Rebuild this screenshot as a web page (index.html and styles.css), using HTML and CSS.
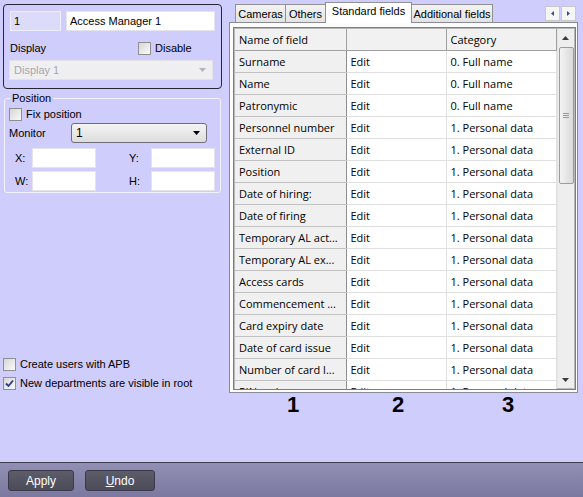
FILE: index.html
```html
<!DOCTYPE html>
<html lang="en">
<head>
<meta charset="UTF-8">
<meta name="viewport" content="width=device-width, initial-scale=1.0">
<title>Access Manager 1</title>
<link rel="stylesheet" href="styles.css">
</head>
<body>
<div class="window">
    <div class="main">
        <div class="left">
            <div class="object-box">
                <div class="name-row">
                    <input class="field id-input" type="text" value="1">
                    <input class="field name-input" type="text" value="Access Manager 1">
                </div>
                <div class="display-row">
                    <span>Display</span>
                    <label class="check"><span class="box"></span>Disable</label>
                </div>
                <div class="select disabled">
                    <span>Display 1</span>
                    <svg class="arrow" width="7" height="4" viewBox="0 0 7 4"><path d="M0 0h7L3.5 4z" fill="#b4b4b8"/></svg>
                </div>
            </div>

            <fieldset class="position">
                <legend>Position</legend>
                <label class="check"><span class="box"></span>Fix position</label>
                <div class="monitor-row">
                    <span class="monitor-label">Monitor</span>
                    <div class="select combo">
                        <span>1</span>
                        <svg class="arrow" width="7" height="4" viewBox="0 0 7 4"><path d="M0 0h7L3.5 4z" fill="#000"/></svg>
                    </div>
                </div>
                <div class="coords">
                    <span class="coord-label">X:</span><input class="field" type="text">
                    <span class="coord-label wide">Y:</span><input class="field" type="text">
                    <span class="coord-label">W:</span><input class="field" type="text">
                    <span class="coord-label wide">H:</span><input class="field" type="text">
                </div>
            </fieldset>

            <div class="options">
                <label class="check"><span class="box"></span>Create users with APB</label>
                <label class="check">
                    <span class="box">
                        <svg width="9" height="9" viewBox="0 0 9 9"><path d="M1 4.5l2.5 2.5L8 1.5" fill="none" stroke="#2b3a80" stroke-width="1.8"/></svg>
                    </span>New departments are visible in root
                </label>
            </div>
        </div>

        <div class="right">
            <div class="tabs">
                <span class="tab" style="width: 51px">Cameras</span>
                <span class="tab" style="width: 41px">Others</span>
                <span class="tab active" style="width: 87px">Standard fields</span>
                <span class="tab" style="width: 82px">Additional fields</span>
                <div class="tab-scroll">
                    <span class="tab-btn"><svg width="3" height="5" viewBox="0 0 3 5"><path d="M3 0v5L0 2.5z" fill="#3d4f7c"/></svg></span>
                    <span class="tab-btn"><svg width="3" height="5" viewBox="0 0 3 5"><path d="M0 0v5l3-2.5z" fill="#3d4f7c"/></svg></span>
                </div>
            </div>

            <div class="panel">
                <div class="grid">
                    <table class="fields">
                        <colgroup>
                            <col style="width: 111px">
                            <col style="width: 100px">
                            <col style="width: 110px">
                        </colgroup>
                        <thead>
                            <tr><th>Name of field</th><th></th><th>Category</th></tr>
                        </thead>
                        <tbody>
                            <tr><td>Surname</td><td>Edit</td><td>0. Full name</td></tr>
                            <tr><td>Name</td><td>Edit</td><td>0. Full name</td></tr>
                            <tr><td>Patronymic</td><td>Edit</td><td>0. Full name</td></tr>
                            <tr><td>Personnel number</td><td>Edit</td><td>1. Personal data</td></tr>
                            <tr><td>External ID</td><td>Edit</td><td>1. Personal data</td></tr>
                            <tr><td>Position</td><td>Edit</td><td>1. Personal data</td></tr>
                            <tr><td>Date of hiring:</td><td>Edit</td><td>1. Personal data</td></tr>
                            <tr><td>Date of firing</td><td>Edit</td><td>1. Personal data</td></tr>
                            <tr><td>Temporary AL act...</td><td>Edit</td><td>1. Personal data</td></tr>
                            <tr><td>Temporary AL ex...</td><td>Edit</td><td>1. Personal data</td></tr>
                            <tr><td>Access cards</td><td>Edit</td><td>1. Personal data</td></tr>
                            <tr><td>Commencement ...</td><td>Edit</td><td>1. Personal data</td></tr>
                            <tr><td>Card expiry date</td><td>Edit</td><td>1. Personal data</td></tr>
                            <tr><td>Date of card issue</td><td>Edit</td><td>1. Personal data</td></tr>
                            <tr><td>Number of card l...</td><td>Edit</td><td>1. Personal data</td></tr>
                            <tr><td>PIN code</td><td>Edit</td><td>1. Personal data</td></tr>
                        </tbody>
                    </table>
                    <div class="vscroll">
                        <span class="sb-btn"><svg width="7" height="4" viewBox="0 0 7 4"><path d="M0 4h7L3.5 0z" fill="#3a3a3a"/></svg></span>
                        <span class="thumb"><span class="grip"></span></span>
                        <span class="sb-btn down"><svg width="7" height="4" viewBox="0 0 7 4"><path d="M0 0h7L3.5 4z" fill="#3a3a3a"/></svg></span>
                    </div>
                </div>
            </div>

            <div class="markers">
                <span style="width: 116px">1</span>
                <span style="width: 94px">2</span>
                <span style="width: 126px">3</span>
            </div>
        </div>
    </div>

    <div class="bar">
        <button class="btn apply">Apply</button>
        <button class="btn undo"><u>U</u>ndo</button>
    </div>
</div>
</body>
</html>
```

FILE: styles.css
```css
/* Access Manager settings */
* {
    margin: 0;
    padding: 0;
    box-sizing: border-box;
}

body {
    width: 583px;
    height: 497px;
    overflow: hidden;
    background-color: #cfcdfb;
    color: #000;
    font-family: "Liberation Sans", Arial, sans-serif;
    font-size: 11px;
}

.window {
    display: flex;
    flex-direction: column;
    height: 497px;
}

.main {
    display: flex;
    height: 462px;
}

/* left side */
.left {
    width: 229px;
    padding: 4px 0 0 3px;
    display: flex;
    flex-direction: column;
}

.object-box {
    width: 219px;
    height: 85px;
    border: 1px solid #262634;
    border-radius: 4px;
    padding: 6px 0 0 6px;
}

.name-row {
    display: flex;
    gap: 5px;
}

.field {
    height: 20px;
    border: 1px solid #e4e4ee;
    background: #fff;
    padding: 0 3px;
    font: inherit;
    color: #000;
    outline: none;
}

.id-input {
    width: 51px;
    background: #dcdbf9;
    border-color: #eeeeff;
}

.name-input {
    width: 149px;
}

.display-row {
    display: grid;
    grid-template-columns: 128px auto;
    align-items: center;
    height: 14px;
    margin-top: 10px;
}

.check {
    display: flex;
    align-items: center;
    gap: 4px;
    height: 14px;
}

.box {
    width: 13px;
    height: 13px;
    border: 1px solid #8e8f8f;
    background: linear-gradient(135deg, #d6d6d6, #fafafa);
    display: flex;
    align-items: center;
    justify-content: center;
}

.select {
    display: flex;
    align-items: center;
    justify-content: space-between;
    height: 20px;
    padding: 0 6px 0 4px;
}

.select.disabled {
    width: 204px;
    margin: 5px 0 0 -1px;
    background: #efeff2;
    border: 1px solid #e2e2e8;
    color: #a6a6ac;
}

.select.combo {
    width: 136px;
    border: 1px solid #6f6f78;
    border-radius: 3px;
    background: linear-gradient(#f4f4f4, #dcdcdc);
    font-size: 12px;
}

/* position group */
.position {
    width: 217px;
    margin: 2px 0 0 1px;
    border: 1px solid #f2f2fd;
    border-radius: 3px;
    padding: 0 4px 1px 4px;
}

.position legend {
    margin-left: 1px;
    padding: 0 2px;
    line-height: 14px;
}

.position .check {
    margin-top: 2px;
}

.monitor-row {
    display: flex;
    align-items: center;
    height: 20px;
    margin-top: 2px;
}

.monitor-label {
    width: 62px;
}

.coords {
    display: grid;
    grid-template-columns: 23px 64px 55px 64px;
    grid-auto-rows: 20px;
    row-gap: 3px;
    align-items: center;
    margin-top: 5px;
}

.coord-label {
    padding-left: 6px;
}

.coord-label.wide {
    padding-left: 33px;
}

.coords .field {
    width: 64px;
}

.options {
    margin-top: 164px;
    display: flex;
    flex-direction: column;
    gap: 5px;
}

/* right side */
.right {
    width: 349px;
}

.tabs {
    display: flex;
    align-items: flex-end;
    height: 23px;
    padding-left: 6px;
    border-bottom: 1px solid #898c95;
}

.tab {
    height: 18px;
    margin-right: -1px;
    border: 1px solid #919191;
    border-bottom: none;
    background: linear-gradient(#f3f3f3, #e3e3e3);
    text-align: center;
    line-height: 18px;
    white-space: nowrap;
}

.tab.active {
    position: relative;
    height: 21px;
    margin-bottom: -1px;
    background: #fff;
    line-height: 17px;
}

.tab-scroll {
    display: flex;
    gap: 1px;
    align-self: flex-start;
    margin: 6px 2px 0 auto;
}

.tab-btn {
    width: 15px;
    height: 15px;
    border: 1px solid #c9c9cc;
    background: #f6f6f6;
    display: flex;
    align-items: center;
    justify-content: center;
}

.panel {
    height: 370px;
    border: 1px solid #898c95;
    border-top: none;
    background: #fcfcfc;
    padding: 4px 1px 0 3px;
}

.grid {
    display: flex;
    align-items: flex-start;
    width: 343px;
    height: 363px;
    border: 1px solid #7d7d7d;
    padding: 1px;
    background: #b8b8b8;
    overflow: hidden;
}

.fields {
    width: 321px;
    table-layout: fixed;
    border-collapse: collapse;
    background: #fff;
    font-family: "Open Sans", "Liberation Sans", sans-serif;
    font-size: 11px;
}

.fields th,
.fields td {
    height: 22px;
    padding: 0 0 0 4px;
    text-align: left;
    font-weight: normal;
    white-space: nowrap;
    overflow: hidden;
}

.fields th {
    height: 21px;
    background: #f1f1f1;
    border-right: 1px solid #a0a0a0;
    border-bottom: 1px solid #a0a0a0;
}

.fields td {
    border-right: 1px solid #e0e0e0;
    border-bottom: 1px solid #e0e0e0;
}

.fields td:first-child {
    background: #f0f0f0;
    border-right-color: #8e8e8e;
    border-bottom-color: #c2c2c2;
}

.vscroll {
    width: 17px;
    height: 100%;
    background: #eeeeee;
    border-left: 1px solid #e4e4e4;
    display: flex;
    flex-direction: column;
}

.sb-btn {
    height: 17px;
    display: flex;
    align-items: center;
    justify-content: center;
}

.sb-btn.down {
    margin-top: auto;
}

.thumb {
    height: 137px;
    margin: 1px 0 0 1px;
    border: 1px solid #9b9b9b;
    border-radius: 2px;
    background: linear-gradient(to right, #f3f3f3, #d9d9d9);
    display: flex;
    align-items: center;
    justify-content: center;
}

.grip {
    width: 6px;
    height: 5px;
    border-top: 1px solid #9a9a9a;
    border-bottom: 1px solid #9a9a9a;
    background: linear-gradient(#9a9a9a, #9a9a9a) center / 100% 1px no-repeat;
}

.markers {
    display: flex;
    padding-left: 6px;
    margin-top: 2px;
    font-size: 22px;
    font-weight: bold;
    line-height: 20px;
}

.markers span {
    text-align: center;
}

/* bottom bar */
.bar {
    height: 35px;
    border-top: 1px solid #3c3c4e;
    background: linear-gradient(#9190b4, #7a789e);
    display: flex;
    gap: 11px;
    padding: 7px 0 0 8px;
}

.btn {
    height: 21px;
    border: 1px solid #3a394c;
    border-radius: 3px;
    background: linear-gradient(#5d5c69, #4c4b58);
    color: #fff;
    font: inherit;
    font-size: 12px;
}

.apply {
    width: 66px;
}

.undo {
    width: 70px;
}
```
